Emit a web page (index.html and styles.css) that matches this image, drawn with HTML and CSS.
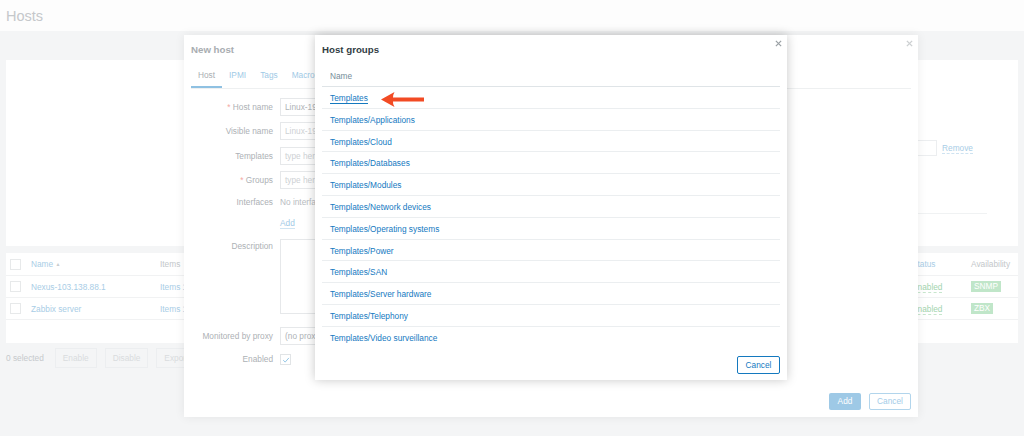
FILE: index.html
```html
<!DOCTYPE html>
<html lang="en">
<head>
<meta charset="utf-8">
<title>Hosts</title>
<link rel="stylesheet" href="styles.css">
</head>
<body>
<div class="page">
  <header class="page-head"><h1 class="page-title">Hosts</h1></header>
  <main class="page-body">
    <section class="filter">
      <div class="filter-row">
        <span class="filter-input"></span>
        <a class="bg-link action">Remove</a>
      </div>
      <div class="filter-divider"></div>
    </section>
    <section class="hosts">
      <div class="hrow hhead">
        <span class="c-check"><i class="bg-cb"></i></span>
        <span class="c-name"><a class="bg-link">Name</a> <span class="sort">&#9650;</span></span>
        <span class="c-items bg-grey">Items</span>
        <span class="c-status"><a class="bg-link">Status</a></span>
        <span class="c-avail bg-grey">Availability</span>
      </div>
      <div class="hrow">
        <span class="c-check"><i class="bg-cb"></i></span>
        <span class="c-name"><a class="bg-link">Nexus-103.138.88.1</a></span>
        <span class="c-items"><a class="bg-link">Items 1</a></span>
        <span class="c-status"><a class="bg-green">Enabled</a></span>
        <span class="c-avail"><span class="badge">SNMP</span></span>
      </div>
      <div class="hrow">
        <span class="c-check"><i class="bg-cb"></i></span>
        <span class="c-name"><a class="bg-link">Zabbix server</a></span>
        <span class="c-items"><a class="bg-link">Items 1</a></span>
        <span class="c-status"><a class="bg-green">Enabled</a></span>
        <span class="c-avail"><span class="badge">ZBX</span></span>
      </div>
    </section>
    <div class="actions">
      <span class="sel">0 selected</span>
      <span class="bg-btn">Enable</span>
      <span class="bg-btn">Disable</span>
      <span class="bg-btn">Export</span>
    </div>
  </main>
</div>

<div class="dialog dialog-host">
  <svg class="close close-dim" viewBox="0 0 8 8" width="7" height="7"><path d="M1 1L7 7M7 1L1 7" stroke="currentColor" stroke-width="1.6"/></svg>
  <h2 class="dh-title">New host</h2>
  <nav class="tabs">
    <span class="tab active">Host</span>
    <span class="tab">IPMI</span>
    <span class="tab">Tags</span>
    <span class="tab">Macros</span>
  </nav>
  <div class="form">
    <label class="lbl"><span class="req">*</span> Host name</label>
    <div class="fld"><span class="inp val">Linux-192.168.1.10</span></div>

    <label class="lbl">Visible name</label>
    <div class="fld"><span class="inp ph">Linux-192.168.1.10</span></div>

    <label class="lbl">Templates</label>
    <div class="fld"><span class="inp ph">type here to search</span></div>

    <label class="lbl"><span class="req">*</span> Groups</label>
    <div class="fld"><span class="inp ph">type here to search</span></div>

    <label class="lbl short">Interfaces</label>
    <div class="fld short"><span class="note">No interfaces are defined.</span></div>

    <span class="lbl short"></span>
    <div class="fld short"><a class="dim-link">Add</a></div>

    <label class="lbl short">Description</label>
    <div class="fld"><span class="textarea"></span></div>

    <label class="lbl">Monitored by proxy</label>
    <div class="fld"><span class="inp sel-inp val">(no proxy)</span></div>

    <label class="lbl tiny">Enabled</label>
    <div class="fld"><span class="dim-cb"><svg viewBox="0 0 10 10" width="8" height="8"><path d="M1.5 5.2L4 7.6L8.6 2.4" fill="none" stroke="currentColor" stroke-width="1.2"/></svg></span></div>
  </div>
  <div class="dh-foot">
    <span class="btn-add">Add</span>
    <span class="btn-cancel-dim">Cancel</span>
  </div>
</div>

<div class="dialog dialog-groups">
  <svg class="close" viewBox="0 0 8 8" width="7" height="7"><path d="M1 1L7 7M7 1L1 7" stroke="currentColor" stroke-width="1.4"/></svg>
  <h2 class="dg-title">Host groups</h2>
  <div class="glist">
    <div class="ghead">Name</div>
    <div class="grow"><a class="glink first">Templates</a></div>
    <div class="grow"><a class="glink">Templates/Applications</a></div>
    <div class="grow"><a class="glink">Templates/Cloud</a></div>
    <div class="grow"><a class="glink">Templates/Databases</a></div>
    <div class="grow"><a class="glink">Templates/Modules</a></div>
    <div class="grow"><a class="glink">Templates/Network devices</a></div>
    <div class="grow"><a class="glink">Templates/Operating systems</a></div>
    <div class="grow"><a class="glink">Templates/Power</a></div>
    <div class="grow"><a class="glink">Templates/SAN</a></div>
    <div class="grow"><a class="glink">Templates/Server hardware</a></div>
    <div class="grow"><a class="glink">Templates/Telephony</a></div>
    <div class="grow last"><a class="glink">Templates/Video surveillance</a></div>
  </div>
  <div class="dg-foot"><span class="btn-cancel">Cancel</span></div>
  <svg class="arrow" viewBox="0 0 44 17" width="44" height="17"><path d="M0 8.5L13.5 1Q11.6 4.6 12 6.6L43 6.6L43 10.6L12 10.6Q11.6 12.6 13.5 16Z" fill="#f24b24"/></svg>
</div>
</body>
</html>
```

FILE: styles.css
```css
* { box-sizing: border-box; }
html, body { margin: 0; padding: 0; }
body {
  width: 1024px;
  height: 436px;
  overflow: hidden;
  position: relative;
  font-family: "Liberation Sans", Arial, Helvetica, sans-serif;
  font-size: 8.3px;
  background: #f4f5f6;
}
a { text-decoration: none; }

/* ---------- background page (dimmed) ---------- */
.page { width: 1024px; height: 436px; }
.page-head {
  height: 31px;
  background: #fdfdfd;
  display: flex;
  align-items: center;
  padding-left: 6px;
}
.page-title {
  margin: 0;
  font-size: 14.5px;
  font-weight: normal;
  color: #c5c8cb;
}
.page-body { padding: 29px 6px 0 6px; }
.filter {
  height: 186px;
  background: #fff;
  padding: 80px 45px 0 0;
}
.filter-row {
  display: flex;
  justify-content: flex-end;
  align-items: center;
  height: 16px;
}
.filter-input {
  width: 160px;
  height: 16px;
  border: 1px solid #eceef0;
  margin-right: 5px;
}
.filter-divider {
  margin: 57px -14px 0 400px;
  border-top: 1px solid #f0f2f3;
}
.bg-link { color: #a9cde6; }
.bg-link.action { border-bottom: 1px dashed #cfe3f1; line-height: 10px; }
.bg-grey { color: #c3c7ca; }
.bg-green { color: #a3d4ae; border-bottom: 1px dashed #c7e6cd; line-height: 10px; }

.hosts {
  margin-top: 7px;
  height: 90px;
  background: #fff;
}
.hrow {
  display: flex;
  align-items: center;
  height: 22px;
  border-bottom: 1px solid #f1f2f3;
}
.hhead { height: 23px; }
.c-check { width: 25px; padding-left: 4px; display: flex; align-items: center; }
.bg-cb { width: 11px; height: 11px; border: 1px solid #e7e9ea; display: block; background: #fff; }
.c-name { width: 129px; }
.c-items { flex: 1; }
.c-status { width: 59px; }
.c-avail { width: 47px; }
.sort { font-size: 5px; color: #c9ccce; vertical-align: 1px; }
.badge {
  display: inline-block;
  background: #c0e6c9;
  color: #fff;
  padding: 0 3px;
  height: 11px;
  line-height: 11px;
}
.actions {
  margin-top: 5px;
  height: 20px;
  display: flex;
  align-items: center;
  gap: 8px;
}
.sel { color: #c6c9cc; margin-right: 3px; }
.bg-btn {
  height: 20px;
  line-height: 18px;
  padding: 0 7px;
  border: 1px solid #eceef0;
  color: #d9dcde;
}

/* ---------- dialogs ---------- */
.dialog {
  position: absolute;
  top: 35px;
  background: #fff;
  padding: 8px 7px 7px 7px;
  display: flex;
  flex-direction: column;
}
.close { position: absolute; top: 5px; right: 5px; color: #9aa0a4; }
.close-dim { color: #cdd0d2; }

.dialog-host {
  left: 184px;
  width: 734px;
  height: 382px;
  box-shadow: 0 0 10px rgba(0, 0, 0, 0.07);
}
.dh-title {
  margin: 0;
  font-size: 9.7px;
  line-height: 14px;
  color: #a8adb1;
}
.tabs {
  margin-top: 8px;
  display: flex;
  border-bottom: 1px solid #eef0f1;
}
.tab {
  padding: 0 7px;
  line-height: 21px;
  border-bottom: 2px solid transparent;
  color: #9fcae6;
}
.tab.active { color: #a9aeb2; border-bottom-color: #8fc1e2; }
.form {
  margin-top: 9px;
  display: grid;
  grid-template-columns: 82px 300px;
  column-gap: 7px;
  grid-template-rows: 24px 24.5px 24px 24.5px 21px 23px 88px 27px 12px;
}
.lbl {
  text-align: right;
  color: #adb1b5;
  line-height: 18px;
  white-space: nowrap;
}
.lbl.short { line-height: 14px; }
.lbl.tiny { line-height: 11px; }
.req { color: #f4a8a4; }
.fld { line-height: 18px; }
.fld.short { line-height: 14px; }
.inp {
  display: block;
  height: 18px;
  line-height: 16px;
  border: 1px solid #e6e8ea;
  padding: 0 4px;
  white-space: nowrap;
  overflow: hidden;
}
.inp.val { color: #aeb2b6; }
.inp.ph { color: #ced1d4; }
.note { color: #b8bcbf; }
.dim-link { color: #9fcae6; border-bottom: 1px solid #cfe4f2; line-height: 10px; display: inline-block; }
.textarea {
  display: block;
  height: 75px;
  border: 1px solid #e6e8ea;
}
.dim-cb {
  width: 11px;
  height: 11px;
  border: 1px solid #e1e4e6;
  display: flex;
  align-items: center;
  justify-content: center;
  color: #8fc3e5;
}
.dh-foot {
  margin-top: auto;
  display: flex;
  justify-content: flex-end;
  gap: 8px;
}
.btn-add, .btn-cancel-dim, .btn-cancel {
  height: 17px;
  line-height: 15px;
  padding: 0 6px;
  border-radius: 2px;
  border: 1px solid transparent;
}
.btn-add { background: #9ec9e6; color: #fff; width: 32px; text-align: center; }
.btn-cancel-dim { border-color: #b2d5ec; color: #a4cce8; width: 42px; text-align: center; }

.dialog-groups {
  left: 315px;
  width: 472px;
  height: 345px;
  box-shadow: 0 0 10px rgba(0, 0, 0, 0.22);
  padding-bottom: 6px;
}
.dg-title {
  margin: 0;
  font-size: 9.7px;
  line-height: 14px;
  color: #323d44;
}
.glist { margin-top: 8px; }
.ghead {
  height: 22px;
  line-height: 22px;
  padding-left: 8px;
  color: #768d99;
  border-bottom: 1px solid #dfe4e7;
}
.grow {
  height: 21.8px;
  line-height: 22px;
  padding-left: 8px;
  border-bottom: 1px solid #ebeef0;
}
.grow.last { border-bottom: none; }
.glink { color: #1479bf; }
.glink.first { border-bottom: 1px solid #1479bf; line-height: 10px; display: inline-block; }
.dg-foot {
  margin-top: auto;
  display: flex;
  justify-content: flex-end;
}
.btn-cancel { border-color: #1479bf; color: #1479bf; width: 43px; height: 18px; line-height: 16px; text-align: center; }
.arrow { position: absolute; left: 66px; top: 56px; }
```
